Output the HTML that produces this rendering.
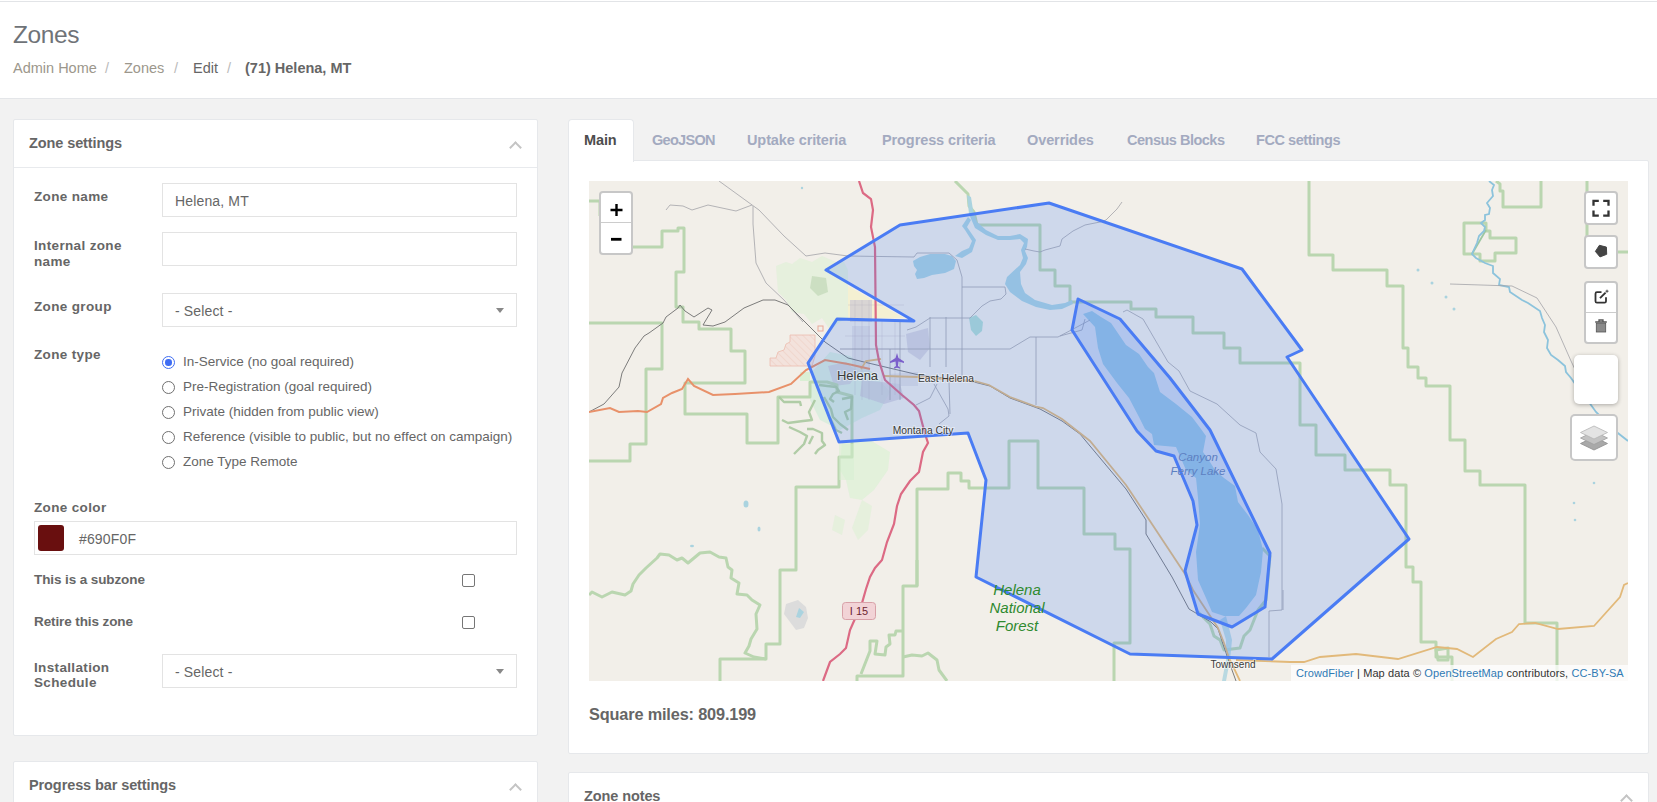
<!DOCTYPE html>
<html><head><meta charset="utf-8">
<style>
*{box-sizing:border-box;margin:0;padding:0}
html,body{width:1657px;height:802px;overflow:hidden;background:#f2f2f2;font-family:"Liberation Sans",sans-serif;color:#666}
.abs{position:absolute}
#hdr{position:absolute;left:0;top:0;width:1657px;height:99px;background:#fff;border-bottom:1px solid #e4e6e9}
#topline{position:absolute;left:0;top:1px;width:1657px;height:1px;background:#e2e4e7}
#title{position:absolute;left:13px;top:21px;font-size:24.5px;color:#6f7378;letter-spacing:-0.4px;white-space:nowrap}
#bc{position:absolute;left:13px;top:60px;font-size:14.5px;color:#9c978c;white-space:nowrap}
#bc span{position:absolute;top:0;white-space:nowrap}
.panel{position:absolute;background:#fff;border:1px solid #e6e8eb;border-radius:2px}
.ph{position:absolute;left:0;top:0;right:0;height:48px;border-bottom:1px solid #e8eaed}
.pt{position:absolute;left:15px;top:15px;font-size:14.5px;font-weight:bold;color:#666;white-space:nowrap;letter-spacing:-0.1px}
.chev{position:absolute;width:9px;height:9px;border-left:2.2px solid #c4c4c4;border-top:2.2px solid #c4c4c4;transform:rotate(45deg)}
.lbl{position:absolute;left:34px;font-size:13.5px;font-weight:bold;color:#666;white-space:nowrap;line-height:16px;letter-spacing:0.35px}
.inp{position:absolute;left:162px;width:355px;height:34px;border:1px solid #e3e3e3;background:#fff}
.inp span{position:absolute;left:12px;top:9px;font-size:14px;color:#666;white-space:nowrap;letter-spacing:0.15px}
.arr{position:absolute;right:12px;top:14px;width:0;height:0;border-left:4px solid transparent;border-right:4px solid transparent;border-top:5px solid #888}
.radio{position:absolute;left:162px;width:13px;height:13px;border-radius:50%;border:1.2px solid #6f6f6f;background:#fff}
.rl{position:absolute;left:183px;font-size:13.5px;color:#666;white-space:nowrap;margin-top:1px}
.cb{position:absolute;left:462px;width:13px;height:13px;border:1px solid #767676;border-radius:2px;background:#fff}
.tab{position:absolute;top:132px;font-size:14.5px;font-weight:bold;color:#a3aac0;white-space:nowrap;letter-spacing:-0.1px}
</style></head><body>
<div id="hdr"></div>
<div id="topline"></div>
<div id="title">Zones</div>
<div id="bc">
 <span style="left:0">Admin Home</span>
 <span style="left:92px;color:#bbb">/</span>
 <span style="left:111px">Zones</span>
 <span style="left:161px;color:#bbb">/</span>
 <span style="left:180px;color:#666">Edit</span>
 <span style="left:214px;color:#bbb">/</span>
 <span style="left:232px;color:#666;font-weight:bold">(71) Helena, MT</span>
</div>

<!-- left panel -->
<div class="panel" style="left:13px;top:119px;width:525px;height:617px">
 <div class="ph"><div class="pt">Zone settings</div><div class="chev" style="left:497px;top:23px"></div></div>
</div>
<div class="lbl" style="top:189px">Zone name</div>
<div class="inp" style="top:183px"><span>Helena, MT</span></div>
<div class="lbl" style="top:238px">Internal zone<br>name</div>
<div class="inp" style="top:232px"></div>
<div class="lbl" style="top:299px">Zone group</div>
<div class="inp" style="top:293px"><span>- Select -</span><div class="arr"></div></div>
<div class="lbl" style="top:347px">Zone type</div>
<div class="radio" style="top:356px;border:1.5px solid #3f6df3"><div style="position:absolute;left:2px;top:2px;width:6.5px;height:6.5px;border-radius:50%;background:#3f6df3"></div></div>
<div class="rl" style="top:353px">In-Service (no goal required)</div>
<div class="radio" style="top:381px"></div>
<div class="rl" style="top:378px">Pre-Registration (goal required)</div>
<div class="radio" style="top:406px"></div>
<div class="rl" style="top:403px">Private (hidden from public view)</div>
<div class="radio" style="top:431px"></div>
<div class="rl" style="top:428px">Reference (visible to public, but no effect on campaign)</div>
<div class="radio" style="top:456px"></div>
<div class="rl" style="top:453px">Zone Type Remote</div>
<div class="lbl" style="top:500px">Zone color</div>
<div class="inp" style="top:521px;left:34px;width:483px"><div style="position:absolute;left:3px;top:3px;width:26px;height:26px;border-radius:3px;background:#690f0f"></div><span style="left:44px">#690F0F</span></div>
<div class="lbl" style="top:572px;letter-spacing:-0.1px">This is a subzone</div>
<div class="cb" style="top:574px"></div>
<div class="lbl" style="top:614px;letter-spacing:-0.1px">Retire this zone</div>
<div class="cb" style="top:616px"></div>
<div class="lbl" style="top:660px;line-height:15px">Installation<br>Schedule</div>
<div class="inp" style="top:654px"><span>- Select -</span><div class="arr"></div></div>

<div class="panel" style="left:13px;top:761px;width:525px;height:60px">
 <div class="pt" style="top:15px">Progress bar settings</div><div class="chev" style="left:497px;top:23px"></div>
</div>

<!-- right panel -->
<div class="panel" style="left:568px;top:160px;width:1081px;height:594px"></div>
<div style="position:absolute;left:568px;top:119px;width:66px;height:43px;background:#fff;border:1px solid #e6e8eb;border-bottom:none;border-radius:4px 4px 0 0"></div>
<div class="tab" style="left:584px;color:#4d4d4d">Main</div>
<div class="tab" style="left:652px;letter-spacing:-0.7px">GeoJSON</div>
<div class="tab" style="left:747px">Uptake criteria</div>
<div class="tab" style="left:882px">Progress criteria</div>
<div class="tab" style="left:1027px">Overrides</div>
<div class="tab" style="left:1127px;letter-spacing:-0.5px">Census Blocks</div>
<div class="tab" style="left:1256px;letter-spacing:-0.45px">FCC settings</div>

<div id="map" style="position:absolute;left:589px;top:181px;width:1039px;height:500px;background:#f2efe9;overflow:hidden">
<!--MAP-->
<svg width="1039" height="500" viewBox="589 181 1039 500" style="position:absolute;left:0;top:0;display:block">
<defs>
<pattern id="hatch" width="5" height="5" patternUnits="userSpaceOnUse" patternTransform="rotate(-45)"><rect width="5" height="5" fill="#f3e2dc"/><path d="M0 0V5" stroke="#ecc6ba" stroke-width="0.8"/></pattern>
</defs>
<rect x="589" y="181" width="1039" height="500" fill="#f2efe9"/>
<!-- light green parks -->
<g fill="#d9f2d2">
<path d="M776 266 L786 262 L792 264 L800 258 L812 262 L822 256 L836 262 L844 262 L848 270 L848 318 L840 322 L830 330 L822 318 L812 324 L804 314 L792 312 L786 300 L778 292 Z" opacity="0.5"/>
<path d="M842 440 L870 440 L890 452 L888 470 L874 490 L862 500 L850 498 L846 480 L840 470 Z" opacity="0.6"/>
<path d="M862 500 L872 506 L868 530 L858 540 L852 528 Z" opacity="0.5"/>
<path d="M835 515 L845 520 L842 535 L832 530 Z" opacity="0.5"/>
<path d="M848 286 L904 318 L848 318 Z" fill="#f4f0cf" opacity="0.9"/>
</g>
<path d="M812 276 L826 278 L828 292 L818 296 L810 288 Z" fill="#c5dbbb" opacity="0.8"/>
<!-- hatched military -->
<path d="M790 335 L815 335 L815 356 L812 366 L770 366 L770 358 L776 358 L778 352 L784 350 L786 344 L790 342 Z" fill="url(#hatch)" stroke="#ecbcae" stroke-width="0.8"/>
<rect x="818" y="326" width="5" height="5" fill="none" stroke="#e8a99a" stroke-width="1"/>
<!-- helena city texture -->
<path d="M812 372 L830 352 L850 356 L872 372 L890 392 L880 410 L862 418 L840 430 L820 420 L810 400 Z" fill="#d3ecd9" opacity="0.75"/>
<g fill="#cfcbd6" opacity="0.7">
<path d="M850 300 L872 300 L872 322 L850 322 Z"/>
<path d="M852 326 L870 326 L870 372 L852 372 Z" opacity="0.6"/>
<path d="M828 366 L846 362 L858 372 L850 384 L834 386 Z"/>
<path d="M862 380 L900 384 L904 398 L884 404 L860 396 Z"/>
<path d="M906 334 L928 328 L930 348 L920 360 L908 352 Z"/>
<path d="M890 374 L918 372 L918 386 L892 386 Z" opacity="0.6"/>
</g>
<g fill="none" stroke="#b4b1c0" stroke-width="0.6" opacity="0.5">
<path d="M848 305 L904 305 M848 320 L904 320 M845 336 L905 336 M840 349 L905 349 M855 300 L855 395 M862 300 L862 400 M869 300 L869 400 M882 320 L882 395 M895 320 L895 395"/>
</g>
<!-- green boundaries -->
<g fill="none" stroke="#bad6b0" stroke-width="3" stroke-linejoin="round">
<path d="M589 201 L600 201 L600 216"/>
<path d="M632 247 L662 247 L662 231 L678 231 L678 228 L684 228 L684 272 L676 272 L676 307 L683 307 L683 322 L699 322 L699 329 L731 329 L731 351 L745 351 L745 383 L685 383 L685 414 L747 414 L747 443 L778 443 L778 397 L810 397 L810 382 L827 382 L837 385 L837 392 L852 396 L852 457 L839 457 L839 487 L796 487 L796 570 L780 570 L780 644 L766 644 L766 659 L720 659 L720 681"/>
<path d="M589 323 L662 323 L662 369 L646 369 L646 444 L630 444 L630 461 L589 461"/>
<path d="M589 595 L592 592 L602 597 L612 592 L625 595 L631 591 L633 584 L639 575 L646 568 L657 558 L660 554 L669 555 L677 560 L682 558 L688 563 L700 553 L710 552 L719 557 L726 558 L728 567 L732 570 L731 578 L739 583 L737 594 L747 595 L752 600 L760 605 L756 614 L757 629 L751 639 L749 646 L745 653 L754 657 L766 659"/>
<path d="M917 560 L917 586 L903 586 L903 676 L857 676 L857 681"/>
<path d="M861 674 L870 651 L870 641 L877 641 L875 654 L885 655 L886 647 L890 644 L889 635 L895 635 L896 631 L903 631"/>
<path d="M903 657 L912 655 L922 656 L928 653 L937 660 L939 670 L947 681"/>
<path d="M917 586 L917 489 L948 489 L948 473 L961 473 L961 481 L969 481 L969 488 L1009 488 L1009 441 L1038 441 L1038 488 L1084 488 L1084 534 L1115 534 L1115 549 L1130 549 L1130 643 L1114 643 L1114 681"/>
<path d="M955 181 L968 194 L969 206 L974 212 L977 225 L1040 225 L1040 270 L1055 270 L1055 286 L1070 286 L1070 302 L1131 302 L1131 309 L1156 309 L1156 317 L1193 317 L1193 333 L1224 333 L1224 348 L1240 348 L1240 363 L1300 363 L1300 425 L1316 425 L1316 455 L1345 455 L1345 470 L1390 470 L1390 485 L1406 485 L1406 567 L1413 567 L1413 582 L1421 582 L1421 642 L1436 642 L1436 657 L1452 657 L1452 681"/>
<path d="M1309 181 L1309 255 L1333 255 L1333 270 L1387 270 L1387 286 L1403 286 L1403 348 L1408 348 L1408 367 L1418 367 L1418 378 L1426 378 L1426 386 L1450 386 L1450 440 L1465 440 L1465 471 L1480 471 L1480 485 L1525 485 L1525 623 L1557 623 L1557 681"/>
<path d="M1496 181 L1500 184 L1500 191 L1503 191 L1503 207 L1541 207 L1541 181"/>
<path d="M1464 223 L1486 223 L1486 231 L1490 231 L1490 238 L1516 238 L1516 246 L1516 253 L1495 253 L1495 261 L1480 261 L1480 254 L1464 254 Z"/><path d="M1486 230 L1479 242 L1472 254" stroke="#9cc7a0" stroke-width="1.8"/>
<path d="M1587 181 L1587 252 L1628 252"/>
<path d="M1436 650 L1448 648 L1448 660 L1438 660 Z"/>
<path d="M1262 548 L1270 556 L1266 600 L1258 610 L1250 630 L1244 636 L1240 648 L1224 650 L1220 640 L1214 636 L1210 624 L1198 612"/>
</g>
<!-- dendritic forest contours -->
<g fill="none" stroke="#a9c99f" stroke-width="2.4" stroke-linejoin="round" opacity="0.9">
<path d="M819 385 L836 387 L839 391 L833 394 L830 399 L834 402"/>
<path d="M824 397 L831 409 L833 417 L840 424 L848 430"/>
<path d="M842 399 L852 397 L851 409 L845 412 L848 420"/>
<path d="M830 418 L834 426 L836 430 L842 433"/>
<path d="M779 397 L784 402 L800 402 L801 406"/>
<path d="M815 400 L809 412 L812 420 L803 421 L788 423 L782 420"/>
<path d="M789 427 L800 432 L807 436 L804 444 L797 451 L794 454"/>
<path d="M807 429 L813 429 L822 433 L822 441 L825 445 L818 450 L815 454"/>
<path d="M813 436 L809 444"/>
</g>
<g fill="#d5f0d0" opacity="0.8">
<path d="M800 372 L810 372 L810 381 L800 381 Z"/>
<path d="M839 444 L854 444 L854 480 L839 480 Z" opacity="0.6"/>
</g>
<!-- quarry -->
<path d="M786 604 L798 600 L806 607 L808 618 L804 628 L796 630 L790 622 L784 614 Z" fill="#dcdcdc"/>
<path d="M799 608 L804 612 L800 618 L796 617 Z" fill="#aad3df"/>
<!-- water -->
<g fill="#aad3df">
<path d="M913 261 L920 257 L930 254 L945 254 L952 256 L956 261 L954 269 L945 273 L932 275 L924 278 L917 279 L915 274 L917 270 L914 266 Z"/>
<path d="M955 256 L962 251 L969 248 L972 241 L965 230 L962 226 L968 217 L971 220 L967 227 L976 240 L972 252 L962 258 Z"/>
<path d="M967 195 L971 197 L973 210 L977 222 L986 230 L998 236 L1010 236 L1020 234 L1028 239 L1027 247 L1025 251 L1028 258 L1026 264 L1020 272 L1021 284 L1025 293 L1035 300 L1052 305 L1065 303 L1072 300 L1073 304 L1062 309 L1050 310 L1036 307 L1022 301 L1010 292 L1005 284 L1007 277 L1020 265 L1023 258 L1021 250 L1024 243 L1020 239 L1010 240 L998 240 L986 235 L975 228 L969 214 Z"/>
<path d="M1083 314 L1092 311 L1101 317 L1111 323 L1126 345 L1139 354 L1148 367 L1154 373 L1160 392 L1176 404 L1192 417 L1201 429 L1206 436 L1203 452 L1210 462 L1215 470 L1224 478 L1235 486 L1238 502 L1248 515 L1258 530 L1263 550 L1261 572 L1256 595 L1246 608 L1239 616 L1224 616 L1212 612 L1206 598 L1198 580 L1196 552 L1200 524 L1198 498 L1196 478 L1186 470 L1176 447 L1154 445 L1152 434 L1145 429 L1139 417 L1129 398 L1117 383 L1103 364 L1098 348 L1095 327 Z"/>
<path d="M1226 616 L1232 640 L1230 660 L1226 681 L1222 681 L1226 660 L1226 640 L1220 620 Z" opacity="0.8"/>
<path d="M969 318 L976 315 L983 322 L982 331 L976 336 L971 330 Z" fill="#b2ddd3"/>
</g>
<g fill="none" stroke="#8cc3dc" stroke-width="1.8">
<path d="M1489 181 L1494 185 L1492 190 L1493 196 L1487 203 L1490 208 L1489 214 L1485 215 L1485 220 L1481 223 L1485 227 L1484 231 L1479 236 L1477 243 L1472 254 L1476 258 L1485 263 L1493 266 L1493 273 L1500 279 L1499 285 L1509 287 L1510 292 L1522 300 L1528 303 L1540 311 L1542 318 L1545 325 L1544 332 L1548 340 L1547 348 L1551 355 L1558 360 L1565 366 L1566 372 L1571 378 L1578 388 L1586 398 L1596 412 L1604 420 L1614 430 L1628 441"/>
</g>
<g fill="#aad3df">
<circle cx="1418" cy="270" r="1.5"/><circle cx="1432" cy="283" r="1.5"/><circle cx="1446" cy="297" r="1.5"/><circle cx="1454" cy="309" r="1.5"/>
<circle cx="1594" cy="483" r="1.3"/><circle cx="1574" cy="503" r="1.3"/><circle cx="1575" cy="520" r="1.3"/>
<circle cx="802" cy="188" r="1.2"/><ellipse cx="746" cy="504" rx="2.5" ry="3.5"/><ellipse cx="759" cy="529" rx="1.5" ry="2.5"/><ellipse cx="692" cy="546" rx="2" ry="1.3"/>
</g>
<!-- minor grey roads -->
<g fill="none" stroke="#a3a3a8" stroke-width="0.8">
<path d="M719 181 L759 210 L784 236 L806 256 L825 253 L848 256"/>
<path d="M666 210 L670 205 L683 206 L692 210 L708 205 L736 211 L752 205"/>
<path d="M753 206 L753 224 L756 263 L766 283 L784 300 L803 322"/>
<path d="M848 256 L914 257 L917 253 L949 253 L957 260 L962 277 L962 380"/>
<path d="M962 287 L1005 287 L1006 294 L1001 299 L990 301 L982 306 L970 318 L930 318 L916 327 L907 330"/>
<path d="M840 349 L1010 349 L1030 337 L1058 337 L1077 327 L1090 320 M1036 337 L1036 405"/>
<path d="M930 317 L930 367 M946 317 L946 367 M890 349 L890 400 M900 320 L900 400"/>
<path d="M1025 249 L1034 251 L1040 252 L1045 250 L1060 246 L1062 239 L1073 231 L1085 225 L1100 222 L1106 220 L1117 209 L1122 202"/>
<path d="M1123 312 L1127 310 L1143 319 L1168 362 L1179 371 L1190 391 L1217 404 L1240 425 L1256 433 L1260 452 L1276 469 L1282 504 L1282 610 L1269 611 L1269 657 M1283 610 L1283 590"/>
<path d="M1060 336 L1071 333 L1082 330 L1085 319"/>
<path d="M1450 284 L1512 286 L1537 298 L1556 327 L1571 361 L1580 380"/>
<path d="M934 384 L948 409 L949 416 L939 424 M916 405 L930 398 L937 384 M949 382 L950 414"/>

</g>
<!-- railroad/dark road -->
<path d="M589 412 L604 404 L619 387 L622 373 L635 348 L644 336 L649 333 L663 323 L666 317 L678 308 L680 305 L685 311 L694 317 L708 308 L712 310 L703 325 L713 326 L725 322 L744 308 L763 300 L775 300 L788 305 L806 323 L825 342 L848 358 L864 362 L919 375 L974 382 L990 386 L1010 398 L1040 409 L1062 421 L1080 434 L1090 446 L1126 489 L1146 520 L1146 534 L1172 577 L1189 609 L1211 622 L1218 629 L1225 650 L1232 670 L1236 681" fill="none" stroke="#6e6e6e" stroke-width="0.9"/>
<!-- tan/yellow road -->
<g fill="none" stroke="#e2b97a" stroke-width="1.8">
<path d="M884 376 L918 377 L974 381 L989 385 L1010 397 L1037 407 L1043 408 L1062 419 L1090 441 L1126 485 L1146 515 L1185 574 L1193 590 L1218 628 L1224 643 L1229 658 L1240 681"/>
<path d="M861 369 L866 361 L881 359"/>
<path d="M1236 660 L1290 662 L1304 662 L1320 657 L1356 654 L1398 659 L1437 647 L1457 649 L1473 657 L1496 639 L1512 632 L1519 624 L1535 623 L1558 629 L1594 626 L1620 597 L1624 585 L1628 583"/>
</g>
<!-- orange highway -->
<path d="M589 412 L610 408 L619 412 L638 411 L647 412 L661 404 L663 398 L672 393 L682 389 L688 379 L694 386 L713 395 L735 394 L769 392 L791 384 L806 370 L825 360 L848 364 L870 369" fill="none" stroke="#e8916a" stroke-width="2"/>
<!-- I-15 red -->
<path d="M859 181 L863 193 L871 199 L873 210 L871 227 L875 247 L876 345 L879 361 L885 380 L902 395 L914 405 L919 411 L925 434 L928 443 L923 452 L919 472 L910 481 L901 494 L897 506 L894 524 L887 542 L882 560 L875 568 L870 577 L866 589 L862 603 L854 621 L850 630 L846 648 L840 654 L830 662 L823 681" fill="none" stroke="#dc6a84" stroke-width="2.2"/>
<!-- polygons -->
<path d="M1049 203 L1242 269 L1302 350 L1287 357 L1409 539 L1272 659 L1130 654 L976 577 L986 480 L968 433 L839 442 L808 363 L837 319 L914 321 L826 270 L900 225 Z" fill="#3f7ff6" fill-opacity="0.2" stroke="#4a7cf4" stroke-width="3" stroke-linejoin="round"/>
<path d="M1078 299 L1120 319 L1170 378 L1210 430 L1270 553 L1265 607 L1232 627 L1198 614 L1185 571 L1197 525 L1193 501 L1174 456 L1156 451 L1137 431 L1072 330 Z" fill="#3f7ff6" fill-opacity="0.2" stroke="#4a7cf4" stroke-width="3" stroke-linejoin="round"/>
<!-- airplane -->
<path d="M897 353 L898.5 358 L904 361.5 L904 363 L898.5 361.5 L898 366 L900 367.5 L900 368.5 L897 367.8 L894 368.5 L894 367.5 L896 366 L895.5 361.5 L890 363 L890 361.5 L895.5 358 Z" fill="#7b5fcb"/>
<!-- labels -->
<g font-family="Liberation Sans" fill="#3a3a3a" text-anchor="middle" stroke="#fff" stroke-opacity="0.45" stroke-width="2" paint-order="stroke">
<text x="857.5" y="380" font-size="13">Helena</text>
<text x="946" y="382" font-size="10.3">East Helena</text>
<text x="923" y="434" font-size="10.3">Montana City</text>
<text x="1233" y="668" font-size="10">Townsend</text>
</g>
<g font-family="Liberation Sans" font-style="italic" text-anchor="middle">
<text x="1198" y="461" font-size="11.5" fill="#5d80c2">Canyon</text>
<text x="1198" y="475" font-size="11.5" fill="#5d80c2">Ferry Lake</text>
<text x="1017" y="595" font-size="15" fill="#2f8a2f">Helena</text>
<text x="1017" y="613" font-size="15" fill="#2f8a2f">National</text>
<text x="1017" y="631" font-size="15" fill="#2f8a2f">Forest</text>
</g>
<!-- I 15 shield -->
<rect x="842.5" y="602.5" width="33" height="17" rx="3" fill="#f2d3d6" stroke="#d8a1a8" stroke-width="1"/>
<text x="859" y="615" font-size="11" fill="#6e2630" text-anchor="middle" font-family="Liberation Sans">I 15</text>
</svg>

<!--/MAP-->
<div style="position:absolute;left:10px;top:10px;width:34px;height:64px;background:#fff;border:2px solid rgba(0,0,0,0.22);border-radius:4px"></div>
<div style="position:absolute;left:12px;top:41px;width:30px;height:1px;background:#ccc"></div>
<svg style="position:absolute;left:10px;top:10px" width="34" height="64" viewBox="0 0 34 64"><path d="M23.5 19H11.5M17.5 13V25" stroke="#000" stroke-width="2.4"/><path d="M12 48.3H22.5" stroke="#000" stroke-width="2.8"/></svg>
<div style="position:absolute;left:995px;top:10px;width:34px;height:34px;background:#fff;border:2px solid rgba(0,0,0,0.22);border-radius:4px"></div>
<svg style="position:absolute;left:995px;top:10px" width="34" height="34" viewBox="0 0 34 34"><path d="M9.5 14.8V9.8H14.8M19.2 9.8H24.5V14.8M24.5 19.5V24.6H19.2M14.8 24.6H9.5V19.5" fill="none" stroke="#333" stroke-width="2.3"/></svg>
<div style="position:absolute;left:995px;top:54px;width:34px;height:34px;background:#fff;border:2px solid rgba(0,0,0,0.22);border-radius:4px"></div>
<svg style="position:absolute;left:995px;top:54px" width="34" height="34" viewBox="0 0 34 34"><path d="M15.4 10.3L22.4 12.1L22.7 19.3L16 21.9L11.4 16.4Z" fill="#444" stroke="#444" stroke-width="1" stroke-linejoin="round"/></svg>
<div style="position:absolute;left:995px;top:100px;width:34px;height:63px;background:#fff;border:2px solid rgba(0,0,0,0.22);border-radius:4px"></div>
<div style="position:absolute;left:997px;top:131px;width:30px;height:1px;background:#ccc"></div>
<svg style="position:absolute;left:995px;top:100px" width="34" height="63" viewBox="0 0 34 63"><path d="M17.5 11.2H13Q11.5 11.2 11.5 12.7V20.2Q11.5 21.7 13 21.7H20.5Q22 21.7 22 20.2V16.2" fill="none" stroke="#333" stroke-width="1.8"/><path d="M16 17.2L21.6 11.6" stroke="#333" stroke-width="1.9"/><path d="M23 8.7V11.7M21.5 10.2H24.5" stroke="#333" stroke-width="0.9"/><rect x="12.3" y="42.2" width="9.4" height="8.8" fill="#8a8a8a" stroke="#555" stroke-width="0.8"/><path d="M11.2 41H22.8M15 40.8V39H19V40.8" fill="none" stroke="#555" stroke-width="1.3"/></svg>
<div style="position:absolute;left:985px;top:174px;width:44px;height:49px;background:#fff;border-radius:5px;box-shadow:0 1px 4px rgba(0,0,0,0.3)"></div>
<div style="position:absolute;left:981px;top:233px;width:48px;height:47px;background:#fff;border:2px solid rgba(0,0,0,0.22);border-radius:5px"></div>
<svg style="position:absolute;left:981px;top:233px" width="48" height="47" viewBox="0 0 48 47"><path d="M24 36L10.5 29.5L24 23L37.5 29.5Z" fill="#a9a9a9" stroke="#8e8e8e" stroke-width="0.8"/><path d="M24 30.5L10.5 24L24 17.5L37.5 24Z" fill="#c2c2c2" stroke="#a0a0a0" stroke-width="0.8"/><path d="M24 25L10.5 18.5L24 12L37.5 18.5Z" fill="#e3e3e3" stroke="#b5b5b5" stroke-width="0.8"/></svg>
<div style="position:absolute;left:702px;top:484px;width:337px;height:16px;background:rgba(255,255,255,0.75);font:11px/16px 'Liberation Sans',sans-serif;letter-spacing:0.1px;color:#333;white-space:nowrap;padding-left:5px"><span style="color:#2f7ab5">CrowdFiber</span> | Map data &copy; <span style="color:#2f7ab5">OpenStreetMap</span> contributors, <span style="color:#2f7ab5">CC-BY-SA</span></div>
</div>

<div style="position:absolute;left:589px;top:705px;font-size:16.3px;font-weight:bold;color:#666;white-space:nowrap;letter-spacing:-0.15px">Square miles: 809.199</div>

<div class="panel" style="left:568px;top:772px;width:1081px;height:60px">
 <div class="pt" style="top:15px">Zone notes</div><div class="chev" style="left:1053px;top:23px"></div>
</div>
</body></html>
